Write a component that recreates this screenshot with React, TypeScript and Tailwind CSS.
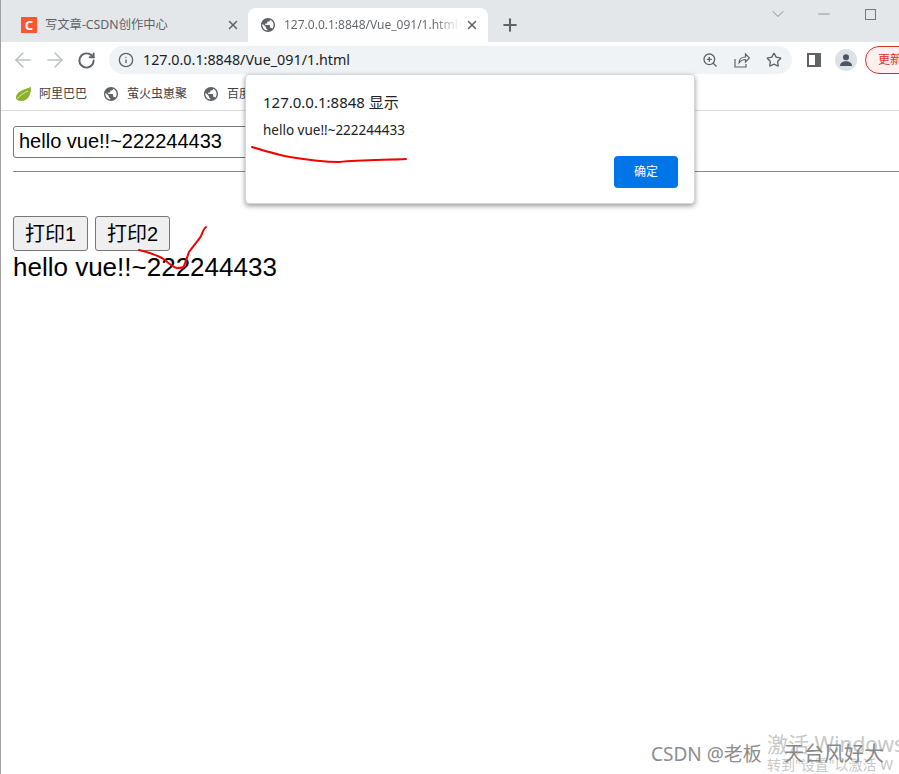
import React from "react";
import { ArrowLeft, ArrowRight, RotateCw, Info, ZoomIn, Star, X, Plus, ChevronDown, Minus } from "lucide-react";

const sans = "font-['Noto_Sans','Noto_Sans_CJK_SC',sans-serif]";

const Globe = ({ className }: { className: string }) => (
  <svg viewBox="2 2 20 20" className={className} fill="#5f6368">
    <path d="M12 2C6.48 2 2 6.48 2 12s4.48 10 10 10 10-4.48 10-10S17.52 2 12 2zm-1 17.93c-3.95-.49-7-3.85-7-7.93 0-.62.08-1.21.21-1.79L9 15v1c0 1.1.9 2 2 2v1.93zm6.9-2.54c-.26-.81-1-1.39-1.9-1.39h-1v-3c0-.55-.45-1-1-1H8v-2h2c.55 0 1-.45 1-1V7h2c1.1 0 2-.9 2-2v-.41c2.93 1.19 5 4.06 5 7.41 0 2.08-.8 3.97-2.1 5.39z" />
  </svg>
);

const TabBar = () => (
  <div className={`flex h-[42px] bg-[#e4e7ea] text-[12px] ${sans}`}>
    <div className="flex w-[247px] items-center pl-5 pt-2">
      <div className="flex h-4 w-4 items-center justify-center bg-[#fc5531] text-[13px] leading-none font-bold text-white">C</div>
      <span className="ml-2 text-[12.3px] text-[#5f6368]">写文章-CSDN创作中心</span>
      <X className="ml-auto mr-2 h-[14px] w-[14px] text-[#5f6368]" strokeWidth={2.5} />
    </div>
    <div className="mt-2 flex w-[240px] items-center rounded-t-lg bg-white pl-[13px]">
      <Globe className="h-[14px] w-[14px]" />
      <span className="ml-[9px] w-[176px] overflow-hidden whitespace-nowrap bg-gradient-to-r from-[#5f6368] from-[85%] to-transparent bg-clip-text text-transparent">
        127.0.0.1:8848/Vue_091/1.html
      </span>
      <X className="ml-auto mr-[9px] h-[14px] w-[14px] text-[#5f6368]" strokeWidth={2.5} />
    </div>
    <div className="flex items-center pt-2 pl-3">
      <Plus className="h-5 w-5 text-[#5f6368]" strokeWidth={2.5} />
    </div>
    <div className="ml-auto flex h-7 items-center gap-[27px] pr-[23px] text-[#74787c]">
      <ChevronDown className="h-5 w-5" strokeWidth={1} absoluteStrokeWidth />
      <Minus className="h-[18px] w-[18px]" strokeWidth={1} absoluteStrokeWidth />
      <div className="ml-[5px] h-[11px] w-[11px] border border-[#74787c]" />
    </div>
  </div>
);

const Toolbar = () => (
  <div className={`flex h-10 items-center bg-white pb-[4px] pl-[10px] ${sans}`}>
    <ArrowLeft className="h-6 w-6 shrink-0 text-[#bdc1c6]" strokeWidth={1.6} />
    <ArrowRight className="ml-2 h-6 w-6 shrink-0 text-[#bdc1c6]" strokeWidth={1.6} />
    <RotateCw className="ml-[10px] h-[19px] w-[19px] shrink-0 text-[#5f6368]" strokeWidth={2.5} />
    <div className="ml-[13px] flex h-[28px] w-[683px] shrink-0 items-center rounded-full bg-[#eff3f5] pl-[9px]">
      <Info className="h-4 w-4 text-[#5f6368]" strokeWidth={2} />
      <span className="ml-[9px] text-[14.3px] text-[#202124]">127.0.0.1:8848/Vue_091/1.html</span>
      <div className="ml-auto flex items-center gap-[16px] pr-[10px] text-[#5f6368]">
        <ZoomIn className="h-4 w-4" />
        <svg viewBox="0 0 16 16" className="h-4 w-4" fill="none" stroke="#5f6368" strokeWidth="1.2">
          <path d="M1 7v8h11v-3" />
          <path d="M5 11c0-4 3-6 6.500-6V2l4 4-4 4V7.500C8 7.500 6.500 9 5 11z" />
        </svg>
        <Star className="h-4 w-4" />
      </div>
    </div>
    <div className="ml-[15px] h-[14px] w-[14px] shrink-0 border-2 border-r-[6px] border-[#5f6368] bg-white" />
    <div className="ml-[14px] flex h-[22px] w-[22px] shrink-0 items-center justify-center rounded-full bg-[#dee1e6]">
      <svg viewBox="0 0 24 24" className="h-4 w-4" fill="#4b5563">
        <circle cx="12" cy="8" r="4.5" />
        <path d="M3 21c0-4.500 4-7 9-7s9 2.500 9 7z" />
      </svg>
    </div>
    <div className="ml-2 flex h-[28px] w-[60px] shrink-0 items-center rounded-l-full border border-[#d93025] bg-[#fdf0ef] pl-3 text-[12px] text-[#d93025]">
      更新
    </div>
  </div>
);

const Bookmarks = () => (
  <div className={`flex h-[29px] items-center border-b border-[#d9dbdd] bg-white pb-[5px] pl-[14px] text-[12px] text-[#3c4043] ${sans}`}>
    <svg viewBox="0 0 16 16" className="h-4 w-4">
      <path d="M1 13C0 7 6 4 16 1c0 8-3 14-10 14-2 0-4-1-5-2z" fill="#8bb32f" />
      <path d="M2 13c3-4 7-6 11-8" stroke="#d9e8a8" fill="none" />
    </svg>
    <span className="ml-2 w-[65px]">阿里巴巴</span>
    <Globe className="h-[14px] w-[14px]" />
    <span className="ml-[9px] w-[77px]">萤火虫崽聚</span>
    <Globe className="h-[14px] w-[14px]" />
    <span className="ml-[9px]">百度</span>
  </div>
);

const Dialog = () => (
  <div className={`absolute left-[244px] top-[74px] h-[130px] w-[450px] rounded-[4px] border border-[#d5d5d5] bg-white pl-[17px] pt-[17px] shadow-[0_2px_5px_rgba(0,0,0,0.4)] ${sans}`}>
    <div className="text-[15px] leading-5 text-[#202124]">127.0.0.1:8848 显示</div>
    <div className="mt-2 text-[13.5px] leading-5 text-[#202124]">hello vue!!~222244433</div>
    <button className="absolute bottom-[15px] right-4 h-8 w-16 rounded-[4px] bg-[#0075e8] text-[12px] text-white">确定</button>
  </div>
);

const Scribbles = () => (
  <svg className="absolute left-[-1px] top-0 h-[774px] w-[899px]" viewBox="0 0 899 774" fill="none" stroke="#f30000" strokeWidth="2" strokeLinecap="round">
    <path d="M252 147C265 151 278 155 290 157C308 160 325 162 339 162C360 160 385 160 406 159" />
    <path d="M139 250C148 252 156 255 162 258C168 262 172 267 177 268C180 268 183 268 184 266L189 252C193 246 198 241 201 236C203 232 203 229 206 227" />
  </svg>
);

const Watermark = () => (
  <div className={`pointer-events-none absolute bottom-0 right-0 h-[50px] w-[260px] overflow-hidden ${sans}`}>
    <span className="absolute left-3 top-[18px] text-[19px] leading-6 text-[#8c8c8c]">CSDN @老板</span>
    <span className="absolute left-32 top-2 whitespace-nowrap text-[21px] leading-6 text-[#c8c8c8]">激活 Windows</span>
    <span className="absolute left-32 top-[31px] whitespace-nowrap text-[14px] leading-5 text-[#c8c8c8]">转到"设置"以激活 W</span>
    <span className="absolute left-[145px] top-[18px] whitespace-nowrap text-[20px] leading-6 text-[#888888]">天台风好大</span>
  </div>
);

export default function App() {
  return (
    <div className="relative h-[774px] w-[899px] overflow-hidden border-l border-[#a0a0a0] bg-white">
      <TabBar />
      <Toolbar />
      <Bookmarks />
      <main className="px-3 pt-[15px] font-['Liberation_Sans','Noto_Sans_CJK_SC',sans-serif] text-black">
        <input
          readOnly
          value="hello vue!!~222244433"
          className="h-8 w-[300px] rounded-[3px] border border-[#767676] px-[5px] pb-px text-[20px] outline-none"
        />
        <hr className="-mr-3 mt-[13px] border-t border-b-0 border-[#8a8a8a]" />
        <div className="mt-[44px] flex gap-[7px]">
          <button className="h-[35px] w-[75px] rounded-[3px] border border-[#767676] bg-[#efefef] pt-px text-[20px]">打印1</button>
          <button className="h-[35px] w-[75px] rounded-[3px] border border-[#767676] bg-[#efefef] pt-px text-[20px]">打印2</button>
        </div>
        <div className="mt-px text-[26px] leading-[31px]">hello vue!!~222244433</div>
      </main>
      <Dialog />
      <Scribbles />
      <Watermark />
    </div>
  );
}
